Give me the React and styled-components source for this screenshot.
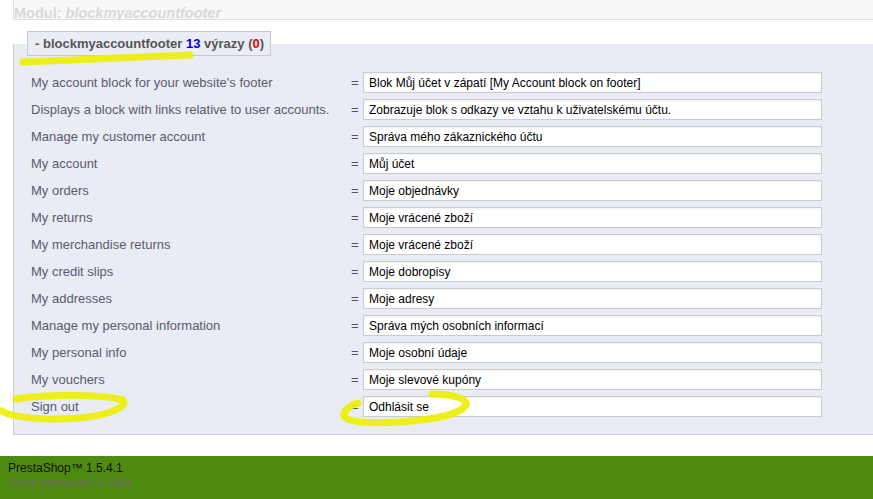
import React from "react";
import styled, { createGlobalStyle } from "styled-components";

const GlobalStyle = createGlobalStyle`
    html, body {
        margin: 0;
        padding: 0;
        background: #fff;
        font-family: "Liberation Sans", Arial, sans-serif;
    }
`;

const Page = styled.div`
    position: relative;
    width: 873px;
    min-height: 499px;
    overflow: hidden;
`;

const ModuleHeader = styled.div`
    margin-left: 13px;
    height: 20px;
    padding-top: 6px;
    box-sizing: border-box;
    background: #f8f8f8;
    border-left: 1px solid #dedede;
    border-bottom: 1px solid #dedede;
    color: #d9d9d9;
    font-size: 14.5px;
    font-weight: bold;
    line-height: 14px;
    white-space: nowrap;
    overflow: hidden;
    em {
        font-style: italic;
    }
`;

const Fieldset = styled.fieldset`
    margin: 11px 0 0 13px;
    padding: 0;
    min-inline-size: 0;
    background: #e9ecf4;
    border: 1px solid #cdcdcd;
    border-top: 0;
    border-right: 0;
`;

const Legend = styled.legend`
    margin-left: 13px;
    padding: 4px 6px 4px 7px;
    background: #eaedf5;
    border: 1px solid #c8c8cc;
    color: #555;
    font-size: 13px;
    font-weight: bold;
    line-height: 15px;
`;

const Count = styled.span`
    color: ${props => props.$color};
`;

const Rows = styled.div`
    display: flex;
    flex-direction: column;
    gap: 6px;
    padding: 16px 0 17px 17px;
`;

const Row = styled.div`
    display: grid;
    grid-template-columns: 320px 12px 459px;
    align-items: center;
    height: 21px;
`;

const Label = styled.label`
    color: #5a5b6b;
    font-size: 13px;
    white-space: nowrap;
`;

const Equals = styled.span`
    color: #555;
    font-size: 13px;
`;

const Input = styled.input`
    box-sizing: border-box;
    width: 459px;
    height: 21px;
    margin: 0;
    padding: 0 5px;
    border: 1px solid #cbcbcb;
    background: #fff;
    box-shadow: inset 0 1px 2px rgba(0, 0, 0, 0.06);
    color: #000;
    font-family: "Liberation Sans", Arial, sans-serif;
    font-size: 12px;
    outline: none;
`;

const Footer = styled.div`
    margin-top: 21px;
    height: 50px;
    padding: 5px 8px;
    box-sizing: border-box;
    background: #4e8a10;
    font-size: 12px;
    line-height: 15px;
`;

const Version = styled.div`
    color: #111;
`;

const LoadTime = styled.div`
    color: #6a6c5c;
`;

const Marks = styled.svg`
    position: absolute;
    left: 0;
    top: 0;
    pointer-events: none;
`;

const rows = [
    ["My account block for your website's footer", "Blok Můj účet v zápatí [My Account block on footer]"],
    ["Displays a block with links relative to user accounts.", "Zobrazuje blok s odkazy ve vztahu k uživatelskému účtu."],
    ["Manage my customer account", "Správa mého zákaznického účtu"],
    ["My account", "Můj účet"],
    ["My orders", "Moje objednávky"],
    ["My returns", "Moje vrácené zboží"],
    ["My merchandise returns", "Moje vrácené zboží"],
    ["My credit slips", "Moje dobropisy"],
    ["My addresses", "Moje adresy"],
    ["Manage my personal information", "Správa mých osobních informací"],
    ["My personal info", "Moje osobní údaje"],
    ["My vouchers", "Moje slevové kupóny"],
    ["Sign out", "Odhlásit se"],
];

const App = () => {
    return (
        <React.Fragment>
            <GlobalStyle />
            <Page>
                <ModuleHeader>
                    Modul: <em>blockmyaccountfooter</em>
                </ModuleHeader>
                <Fieldset>
                    <Legend>
                        - blockmyaccountfooter <Count $color="#0000dd">13</Count> výrazy (<Count $color="#e00">0</Count>)
                    </Legend>
                    <Rows>
                        {rows.map(([source, target], i) => (
                            <Row key={i}>
                                <Label>{source}</Label>
                                <Equals>=</Equals>
                                <Input defaultValue={target} />
                            </Row>
                        ))}
                    </Rows>
                </Fieldset>
                <Footer>
                    <Version>PrestaShop™ 1.5.4.1</Version>
                    <LoadTime>Doba nahrávání:2.385s</LoadTime>
                </Footer>
                <Marks width="873" height="499" viewBox="0 0 873 499">
                    <g fill="none" stroke="#ecef06" strokeWidth="7" strokeLinecap="round" strokeLinejoin="round" opacity="0.92">
                        <path d="M23 62 C60 60 120 58 190 55" />
                        <path d="M16 399 C50 394 100 394 123 400 C128 406 112 415 80 418 C45 421 10 417 2 411" />
                        <path d="M432 394 C450 394 468 398 466 405 C460 414 440 419 400 422 C370 424 345 422 344 416 C343 411 350 405 358 403" />
                    </g>
                </Marks>
            </Page>
        </React.Fragment>
    );
};

export default App;
